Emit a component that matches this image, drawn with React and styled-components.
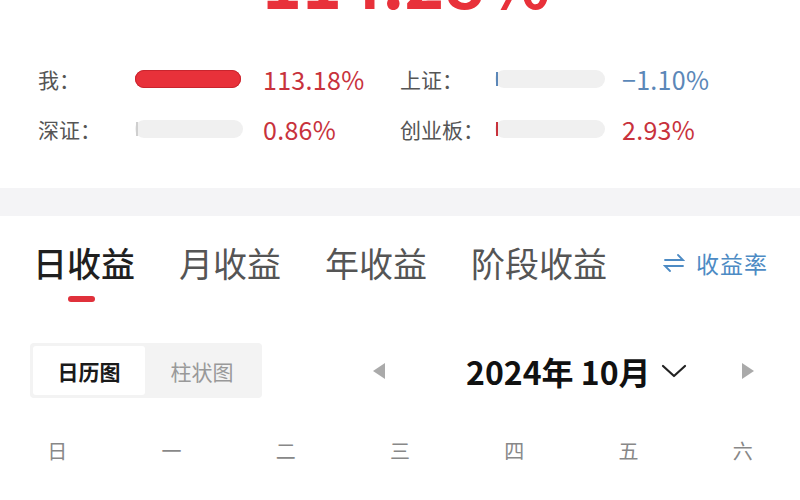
import styled, { createGlobalStyle } from 'styled-components';

const GlobalStyle = createGlobalStyle`
  html, body {
    margin: 0;
    padding: 0;
    background: #ffffff;
    font-family: "Noto Sans CJK SC", "Noto Sans", sans-serif;
    width: 800px;
    height: 500px;
    overflow: hidden;
  }
`;

const Page = styled.div`
  width: 800px;
  height: 500px;
  overflow: hidden;
  background: #ffffff;
`;

/* ---------- summary ---------- */

const Summary = styled.section`
  height: 188px;
  overflow: hidden;
`;

const BigNumber = styled.div`
  height: 58px;
  display: flex;
  justify-content: center;
  align-items: flex-end;
  overflow: hidden;
`;

const BigValue = styled.div`
  font-family: "Noto Sans CJK SC", sans-serif;
  font-weight: 700;
  font-size: 68px;
  line-height: 68px;
  color: #e8313a;
  margin-bottom: 44px;
  padding-left: 12px;
`;

const StatsGrid = styled.div`
  display: grid;
  grid-template-columns: 362px 1fr;
  padding-left: 38px;
`;

const StatCell = styled.div`
  display: flex;
  align-items: center;
  height: 50px;
  margin-top: ${({ $first }) => ($first ? '-4px' : '0')};
`;

const StatLabel = styled.span`
  width: ${({ $w }) => $w}px;
  font-size: 21px;
  color: #555;
  flex-shrink: 0;
  white-space: nowrap;
`;

const Track = styled.div`
  position: relative;
  width: ${({ $w }) => $w}px;
  height: 18px;
  border-radius: 9px;
  background: #f0f0f0;
  flex-shrink: 0;
`;

const Fill = styled.div`
  height: 100%;
  border-radius: 9px;
  background: #e8313a;
  box-shadow: inset 0 0 0 1px #c9252e;
`;

const Tick = styled.div`
  position: absolute;
  left: 1px;
  top: 2px;
  width: 2px;
  height: 14px;
  background: ${({ $color }) => $color};
`;

const StatValue = styled.span`
  margin-left: ${({ $gap }) => $gap}px;
  font-family: "Noto Sans CJK SC", "Noto Sans", sans-serif;
  font-size: 25px;
  color: ${({ $color }) => $color};
  letter-spacing: 0.3px;
`;

const GrayBand = styled.div`
  height: 28px;
  background: #f4f4f6;
`;

/* ---------- tabs ---------- */

const TabBar = styled.nav`
  display: flex;
  align-items: flex-start;
  padding: 26px 32px 0 33px;
`;

const Tab = styled.div`
  display: flex;
  flex-direction: column;
  align-items: center;
  margin-right: 44px;
`;

const TabText = styled.span`
  font-size: 34px;
  line-height: 42px;
  color: ${({ $active }) => ($active ? '#1f1f1f' : '#555')};
  font-weight: ${({ $active }) => ($active ? 500 : 400)};
`;

const TabIndicator = styled.div`
  width: 27px;
  height: 6px;
  margin-top: 12px;
  margin-left: -6px;
  border-radius: 3px;
  background: ${({ $active }) => ($active ? '#e0313b' : 'transparent')};
`;

const RateLink = styled.div`
  margin-left: auto;
  display: flex;
  align-items: center;
  gap: 11px;
  height: 42px;
  font-size: 23px;
  color: #4d8bc4;
  letter-spacing: 1px;
`;

/* ---------- calendar controls ---------- */

const ControlRow = styled.div`
  display: flex;
  align-items: center;
  padding: 41px 0 0 30px;
`;

const Segmented = styled.div`
  display: flex;
  height: 55px;
  padding: 3px;
  box-sizing: border-box;
  background: #f3f3f3;
  border-radius: 4px;
`;

const Segment = styled.div`
  width: ${({ $active }) => ($active ? '112px' : '114px')};
  display: flex;
  align-items: center;
  justify-content: center;
  font-size: 21px;
  font-weight: ${({ $active }) => ($active ? 700 : 400)};
  color: ${({ $active }) => ($active ? '#1a1a1a' : '#999')};
  background: ${({ $active }) => ($active ? '#ffffff' : 'transparent')};
  border-radius: 3px;
`;

const MonthNav = styled.div`
  display: flex;
  align-items: center;
  flex: 1;
`;

const Arrow = styled.svg`
  width: 14px;
  height: 18px;
  margin-left: ${({ $ml }) => $ml}px;
`;

const MonthTitle = styled.div`
  display: flex;
  align-items: center;
  margin-left: 80px;
  font-family: "Noto Sans CJK SC", "Liberation Sans", sans-serif;
  font-weight: 700;
  font-size: 32px;
  color: #111;
`;

const Chevron = styled.svg`
  width: 26px;
  height: 16px;
  margin-left: 10px;
`;

/* ---------- week header ---------- */

const WeekRow = styled.div`
  display: grid;
  grid-template-columns: repeat(7, 1fr);
  margin-top: 38px;
`;

const WeekDay = styled.div`
  text-align: center;
  font-size: 20px;
  color: #888;
`;

const stats = [
  { label: '我：', value: '113.18%', color: '#c8323c', fill: 100, tick: null, lw: 97, bw: 106, gap: 22 },
  { label: '上证：', value: '−1.10%', color: '#5b87b8', fill: 0, tick: '#5b87b8', lw: 95, bw: 110, gap: 17 },
  { label: '深证：', value: '0.86%', color: '#c8323c', fill: 0, tick: '#cfcfcf', lw: 97, bw: 108, gap: 20 },
  { label: '创业板：', value: '2.93%', color: '#c8323c', fill: 0, tick: '#c8323c', lw: 95, bw: 110, gap: 17 },
];

const tabs = ['日收益', '月收益', '年收益', '阶段收益'];
const weekDays = ['日', '一', '二', '三', '四', '五', '六'];

const SwapIcon = () => (
  <svg width="22" height="20" viewBox="0 0 22 20" fill="none" stroke="#4d8bc4" strokeWidth="1.8" strokeLinecap="round">
    <path d="M2 7 H20 L15 2" />
    <path d="M20 13 H2 L7 18" />
  </svg>
);

export default function App() {
  return (
    <Page>
      <GlobalStyle />
      <Summary>
        <BigNumber>
          <BigValue>114.28%</BigValue>
        </BigNumber>
        <StatsGrid>
          {stats.map((s, i) => (
            <StatCell key={s.label} $first={i < 2}>
              <StatLabel $w={s.lw}>{s.label}</StatLabel>
              <Track $w={s.bw}>
                {s.fill > 0 && <Fill style={{ width: `${s.fill}%` }} />}
                {s.tick && <Tick $color={s.tick} />}
              </Track>
              <StatValue $color={s.color} $gap={s.gap}>{s.value}</StatValue>
            </StatCell>
          ))}
        </StatsGrid>
      </Summary>
      <GrayBand />

      <TabBar>
        {tabs.map((t, i) => (
          <Tab key={t}>
            <TabText $active={i === 0}>{t}</TabText>
            <TabIndicator $active={i === 0} />
          </Tab>
        ))}
        <RateLink>
          <SwapIcon />
          收益率
        </RateLink>
      </TabBar>

      <ControlRow>
        <Segmented>
          <Segment $active>日历图</Segment>
          <Segment>柱状图</Segment>
        </Segmented>
        <MonthNav>
          <Arrow $ml={110} viewBox="0 0 14 18">
            <polygon points="13,1 13,17 1,9" fill="#aaaaaa" />
          </Arrow>
          <MonthTitle>
            2024年 10月
            <Chevron viewBox="0 0 26 16" fill="none" stroke="#222" strokeWidth="2.2" strokeLinecap="round" strokeLinejoin="round">
              <path d="M2 3 L13 13 L24 3" />
            </Chevron>
          </MonthTitle>
          <Arrow $ml={54} viewBox="0 0 14 18">
            <polygon points="1,1 1,17 13,9" fill="#aaaaaa" />
          </Arrow>
        </MonthNav>
      </ControlRow>

      <WeekRow>
        {weekDays.map((d) => (
          <WeekDay key={d}>{d}</WeekDay>
        ))}
      </WeekRow>
    </Page>
  );
}
